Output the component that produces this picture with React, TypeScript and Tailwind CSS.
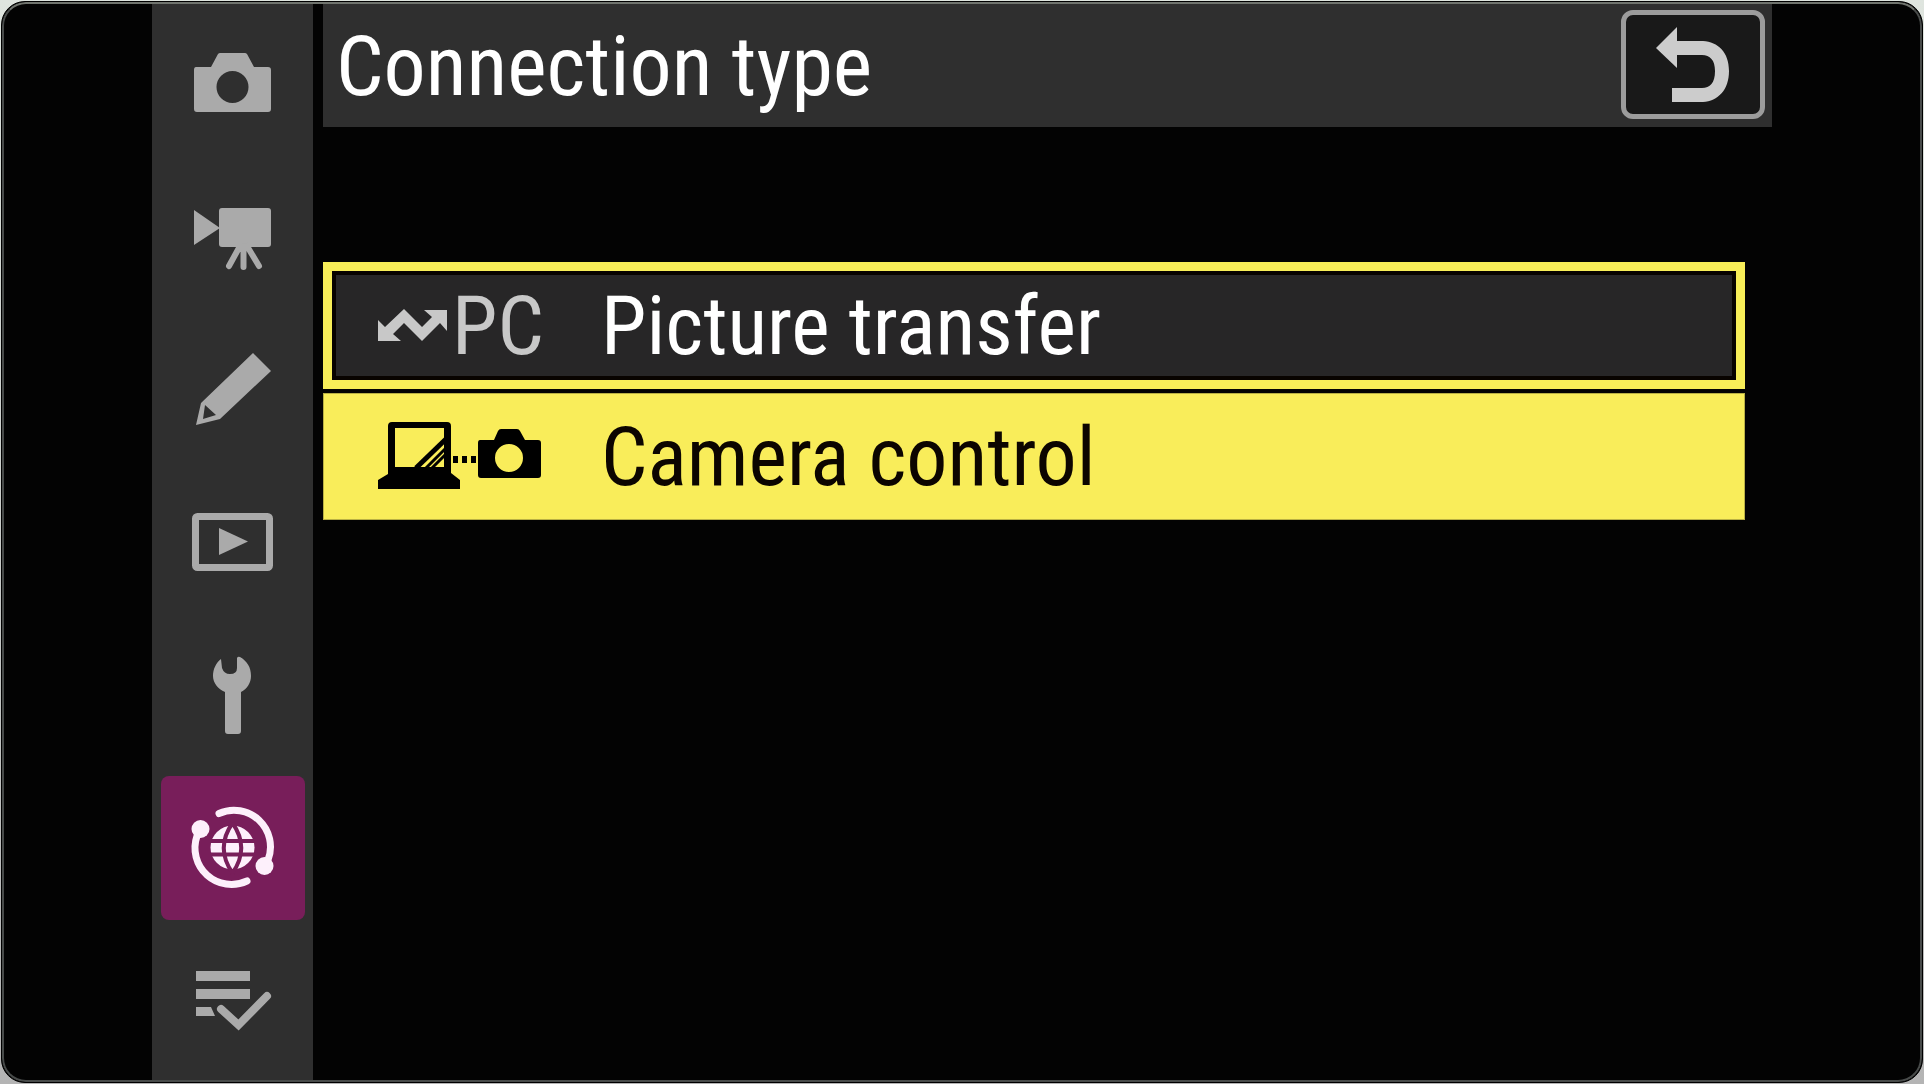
import type { ReactNode } from 'react';

function Icon({ children }: { children: ReactNode }) {
  return (
    <svg viewBox="0 0 80 80" className="size-20 overflow-visible" fill="currentColor" aria-hidden="true">
      {children}
    </svg>
  );
}

const tabs = [
  {
    label: 'Photo shooting',
    icon: (
      <Icon>
        <path
          fillRule="evenodd"
          d="M3 24H18L25 11Q26 10 27 10H52Q53 10 54 11L61 24H75Q78 24 78 27V66Q78 69 75 69H4Q1 69 1 66V27Q1 24 3 24ZM39.500 28A16 16 0 1 0 39.500 60A16 16 0 1 0 39.500 28Z"
        />
      </Icon>
    ),
  },
  {
    label: 'Video recording',
    icon: (
      <Icon>
        <path d="M1 14L27 32L1 49Z" />
        <rect x="26" y="12" width="52" height="39" rx="3" />
        <path d="M47 50L36 70M50.500 50V71M54 50L66 70" fill="none" stroke="currentColor" strokeWidth="6" strokeLinecap="round" />
      </Icon>
    ),
  },
  {
    label: 'Custom settings',
    icon: (
      <Icon>
        <path fillRule="evenodd" d="M60 4L78 22L27 70L3 76L8 54ZM12 56L10 70L23 66Z" />
      </Icon>
    ),
  },
  {
    label: 'Playback',
    icon: (
      <Icon>
        <rect x="2.500" y="14.500" width="74" height="51" rx="2" fill="none" stroke="currentColor" strokeWidth="7" />
        <path d="M26 26L55 39.500L26 53Z" />
      </Icon>
    ),
  },
  {
    label: 'Setup',
    icon: (
      <Icon>
        <path d="M28 4L29 13Q31 19 37 19Q44 19 44 13V3Q45 1 47 2C54 6 58 12 58 21C58 28 54 34 48 37V76Q48 79 45 79H35Q32 79 32 76V37C25 34 20 28 20 21C20 14 23 8 28 4Z" />
      </Icon>
    ),
  },
  {
    label: 'Network',
    active: true,
    icon: (
      <Icon>
        <g fill="none" stroke="currentColor" strokeWidth="7" strokeLinecap="round">
          <path d="M26 5.500A36.500 36.500 0 0 1 75 52" />
          <path d="M54 73A36.500 36.500 0 0 1 4 28" />
        </g>
        <circle cx="71.500" cy="58" r="9" />
        <circle cx="7.500" cy="21" r="9" />
        <circle cx="39.500" cy="39.500" r="22" />
        <g fill="none" stroke="#781e5a" strokeWidth="4">
          <path d="M15 33H64M15 46.500H64" />
          <path d="M39.500 15Q22 40 39.500 65M39.500 15Q57 40 39.500 65" />
        </g>
      </Icon>
    ),
  },
  {
    label: 'My menu',
    icon: (
      <Icon>
        <path d="M3 10H57V20H3ZM3 28H57V38H3ZM3 46H18L22 55H3Z" />
        <path d="M28 48L45.500 64L74 35" fill="none" stroke="currentColor" strokeWidth="8" strokeLinecap="round" />
      </Icon>
    ),
  },
];

function TransferArrow() {
  return (
    <svg viewBox="0 0 70 34" className="h-[34px] w-[70px] shrink-0" fill="currentColor" aria-hidden="true">
      <path d="M0 11L7 18L26 0L44 18L54 8L46 1H69V22L62 14L44 32L26 14L15 25L23 32H0Z" />
    </svg>
  );
}

function LaptopToCamera() {
  return (
    <svg viewBox="0 0 164 68" className="h-[68px] w-[164px]" fill="currentColor" aria-hidden="true">
      <path fillRule="evenodd" d="M10 5Q10 1 14 1H69Q73 1 73 5V52L82 59V68H0V59L10 53ZM17 7V46H66V7Z" />
      <path d="M38 47L68 18" fill="none" stroke="currentColor" strokeWidth="5" />
      <path d="M46 49L68 27M52 49L68 33" fill="none" stroke="currentColor" strokeWidth="3" />
      <path d="M75 35H80V42H75ZM84 35H89V42H84ZM93 35H98V42H93Z" />
      <path
        fillRule="evenodd"
        d="M102 19H116L120 10Q121 8 123 8H139Q141 8 142 10L147 19H160Q163 19 163 22V54Q163 57 160 57H103Q100 57 100 54V22Q100 19 102 19ZM131 23A14 14 0 1 0 131 51A14 14 0 1 0 131 23Z"
      />
    </svg>
  );
}

export default function App() {
  return (
    <div className="relative flex min-h-screen bg-[linear-gradient(#dfe5df,#b4b4b4)] p-px font-['Roboto_Condensed','Open_Sans',sans-serif] text-white">
      <div className="relative flex flex-1 overflow-hidden rounded-3xl border border-black bg-[#030303] px-[150px]">
        <nav aria-label="Menus" className="flex w-[161px] shrink-0 flex-col justify-between bg-[#2f2f2f] py-[9px] pr-2 pl-[9px]">
          {tabs.map((tab) => (
            <button
              key={tab.label}
              type="button"
              aria-label={tab.label}
              className={
                tab.active
                  ? 'flex h-36 w-full items-center justify-center rounded-lg bg-[#781e5a] text-[#fdf0fb]'
                  : 'flex h-36 w-full items-center justify-center rounded-lg text-[#aaaaaa]'
              }
            >
              {tab.icon}
            </button>
          ))}
        </nav>

        <main className="ml-[10px] flex flex-1 flex-col">
          <header className="flex h-[125px] items-center justify-between bg-[#2f2f2f] pr-[7px] pl-[13px]">
            <h1 className="pt-1 text-[84px] leading-none">Connection type</h1>
            <button
              type="button"
              aria-label="Back"
              className="flex h-[109px] w-36 items-center justify-center rounded-xl border-5 border-[#9c9c9c] bg-[#191919] text-[#cccccc]"
            >
              <svg viewBox="0 0 74 76" className="h-[76px] w-[74px]" fill="currentColor" aria-hidden="true">
                <path d="M0 21L21 0V14H47C62 15 73 25 73 44C73 63 62 74 47 75H16V61H46C54 61 59 56 59 44C59 33 54 28 46 28H21V41Z" />
              </svg>
            </button>
          </header>

          <div className="mt-[135px] mr-[27px] flex flex-col gap-1 text-[82px] leading-none">
            <button
              type="button"
              className="flex h-[127px] items-center border-9 border-[#f8ee58] bg-[#272627] pl-[46px] text-left shadow-[inset_0_0_0_4px_#080300]"
            >
              <span className="flex w-[223px] items-center gap-1 text-[#c8c8c8]">
                <TransferArrow />
                PC
              </span>
              Picture transfer
            </button>
            <button type="button" className="flex h-[127px] items-center border border-[#b9b044] bg-[#f9ed5a] pl-[54px] text-left text-[#0c0500]">
              <span className="w-[223px] pb-1 text-black">
                <LaptopToCamera />
              </span>
              Camera control
            </button>
          </div>
        </main>
        <div className="pointer-events-none absolute inset-0 rounded-3xl border-2 border-[#484b4a] border-t-[#70746e]" />
      </div>
    </div>
  );
}
